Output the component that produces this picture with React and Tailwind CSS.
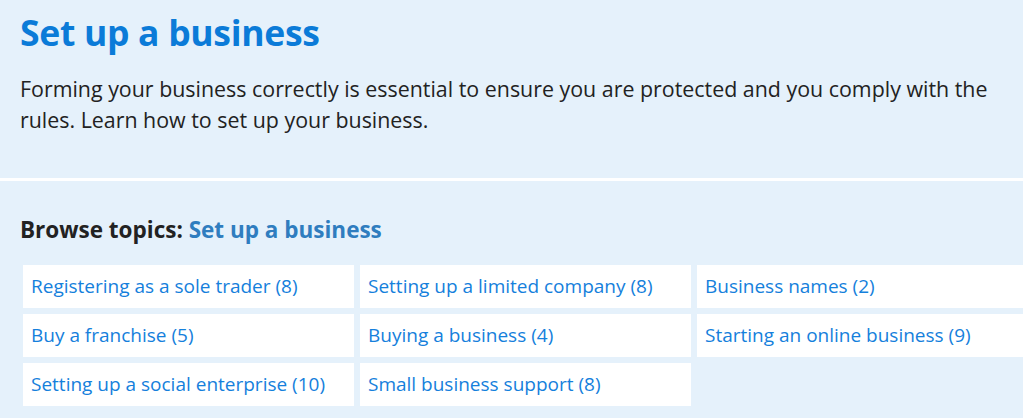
const topics = [
  { label: "Registering as a sole trader", count: 8 },
  { label: "Setting up a limited company", count: 8 },
  { label: "Business names", count: 2 },
  { label: "Buy a franchise", count: 5 },
  { label: "Buying a business", count: 4 },
  { label: "Starting an online business", count: 9 },
  { label: "Setting up a social enterprise", count: 10 },
  { label: "Small business support", count: 8 },
];

const App = () => {
  return (
    <div className="w-[1023px] h-[418px] overflow-hidden bg-[#e5f1fb] font-['Open_Sans',sans-serif]">
      {/* Hero */}
      <div className="pl-5 pt-[9px] pb-[43px]">
        <h1 className="text-[35.5px] leading-[46px] font-bold text-[#0b7bd8] tracking-[-0.3px]">
          Set up a business
        </h1>
        <p className="mt-[18px] w-[990px] text-[21.4px] leading-[31px] text-[#222]">
          Forming your business correctly is essential to ensure you are protected and you comply with the rules. Learn how to set up your business.
        </p>
      </div>

      <div className="h-[3px] bg-white" />

      {/* Browse topics */}
      <div className="pl-[23px] pt-[35px]">
        <h2 className="-ml-[3px] text-[22.5px] leading-[28px] font-bold text-[#222]">
          Browse topics: <span className="text-[#2f7dbf]">Set up a business</span>
        </h2>
        <ul className="mt-[21px] grid grid-cols-[331px_331px_331px] gap-[6px]">
          {topics.map((topic) => (
            <li key={topic.label} className="h-[43px] bg-white flex items-center px-2">
              <a href="#" className="text-[19px] text-[#1580dc]">
                {topic.label} ({topic.count})
              </a>
            </li>
          ))}
        </ul>
      </div>
    </div>
  );
};

export default App;
